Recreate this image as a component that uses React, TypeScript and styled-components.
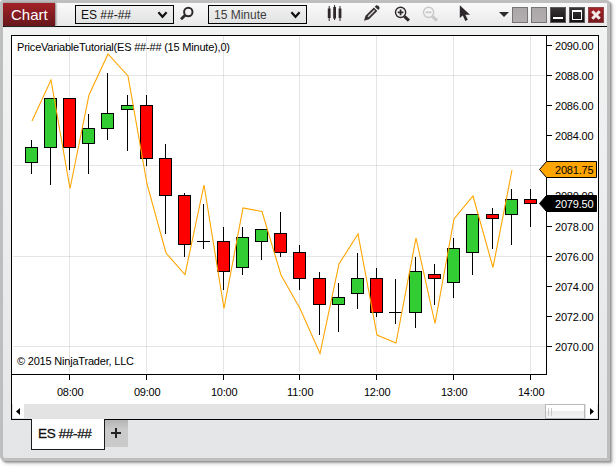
import React from 'react';
import styled, { createGlobalStyle } from 'styled-components';

const GlobalStyle = createGlobalStyle`
  * { box-sizing: border-box; }
  body { margin: 0; background: #fff; overflow: hidden; font-family: "Liberation Sans", Arial, sans-serif; }
`;

const Desktop = styled.div`
  width: 616px;
  height: 467px;
  background: #fff;
`;

const Window = styled.main`
  display: flex;
  flex-direction: column;
  width: 610px;
  height: 461px;
  border: 3px solid #bebebe;
  border-radius: 3px 4px 2px 5px;
  background: linear-gradient(#f2f4f4, #e4e5e7);
  box-shadow: 1px 1px 0 #9a9a9a, 2px 2px 2px #aaa, 3px 3px 4px #ddd;
`;

const Header = styled.header`
  display: flex;
  flex: none;
  height: 24px;
  border-bottom: 1px solid #000;
  background: linear-gradient(#fafafa, #e9e9ea);
`;

const Title = styled.h1`
  display: flex;
  align-items: center;
  width: 52px;
  height: 23px;
  margin: 0;
  padding-left: 8px;
  background: linear-gradient(#a32126, #66171c);
  box-shadow: 1px 0 2px #777;
  color: #fff;
  font-size: 15px;
  font-weight: 400;
`;

const Toolbar = styled.div`
  display: flex;
  flex: 1;
  padding: 2px 3px 0 20px;
`;

const Picker = styled.button<{ $tone: string }>`
  display: flex;
  align-items: center;
  justify-content: space-between;
  width: 99px;
  height: 19px;
  padding: 0 5px 0 5px;
  border: 1px solid #000;
  background: linear-gradient(#f1f1f1, #e1e2e2);
  color: ${(p) => p.$tone};
  font: 12px "Liberation Sans", Arial, sans-serif;
`;

const Slot = styled.span<{ $width: number; $gap: number }>`
  display: flex;
  flex: none;
  width: ${(p) => p.$width}px;
  height: 19px;
  margin-left: ${(p) => p.$gap}px;
`;

const Caption = styled.div`
  display: flex;
  gap: 3px;
  margin: 2px 0 0 auto;
`;

const CaptionButton = styled.button<{ $kind: 'blank' | 'dark' | 'close' }>`
  display: flex;
  width: 16px;
  height: 16px;
  padding: 0;
  border: 1px solid ${(p) => (p.$kind === 'blank' ? '#777476' : p.$kind === 'dark' ? '#5e5a5c' : '#8c4448')};
  background: ${(p) =>
    p.$kind === 'blank'
      ? 'linear-gradient(#aaa6a7, #b3afb0)'
      : p.$kind === 'dark'
        ? 'linear-gradient(#383435, #151213)'
        : 'linear-gradient(#a42328, #741b20)'};
`;

const ChartPanel = styled.section`
  display: flex;
  flex: none;
  flex-direction: column;
  width: 588px;
  height: 385px;
  margin: 8px 0 0 8px;
  border: 1px solid #000;
  background: #fff;
`;

const Plot = styled.svg`
  display: block;
  flex: none;
`;

const Scrollbar = styled.div`
  display: flex;
  flex: none;
  height: 15px;
  padding: 0 1px;
  background: #e3e3e3;
`;

const Arrow = styled.button`
  display: flex;
  width: 11px;
  height: 14px;
  padding: 0;
  border: 0;
  background: #fff;
`;

const Thumb = styled.div`
  display: flex;
  gap: 2px;
  width: 40px;
  height: 15px;
  margin-left: auto;
  margin-right: 1px;
  padding: 3px 2px;
  border: 1px solid #b9b9b9;
  background: linear-gradient(#fff 45%, #ececec 50%, #f3f3f3);
`;

const Grip = styled.i`
  width: 1px;
  height: 8px;
  background: #c9c9c9;
`;

const Tabs = styled.nav`
  display: flex;
  height: 31px;
  margin: -1px 0 0 28px;
`;

const Tab = styled.button`
  width: 74px;
  height: 31px;
  padding: 0 0 2px 6px;
  border: 1px solid #1b1b1b;
  border-top: 0;
  background: #fff;
  color: #111;
  font: 13.5px "Liberation Sans", Arial, sans-serif;
  letter-spacing: -0.35px;
  -webkit-text-stroke: 0.3px #111;
  text-align: left;
  white-space: nowrap;
`;

const AddTab = styled.button`
  display: flex;
  width: 23px;
  height: 27px;
  margin-top: 1px;
  padding: 0;
  border: 0;
  background: linear-gradient(#b4b4b4, #cacaca 35%);
`;

const Chevron = () => (
  <svg width="11" height="8" viewBox="0 0 11 8">
    <path d="M1.4 1.3 5.5 5.8 9.6 1.3" fill="none" stroke="#111" strokeWidth="2.2" />
  </svg>
);

const GREEN = '#32cd32';
const RED = '#ff0000';

// [center x, wick top, wick bottom, body top, body bottom, rising]
type Candle = [number, number, number, number, number, boolean];
const candles: Candle[] = [
  [31, 140, 174, 147, 163, true],
  [50, 98, 185, 98, 148, true],
  [69, 98, 170, 98, 148, false],
  [88, 114, 174, 128, 144, true],
  [107, 73, 140, 113, 129, true],
  [127, 95, 151, 105, 110, true],
  [146, 95, 166, 105, 159, false],
  [165, 144, 234, 158, 196, false],
  [184, 193, 257, 195, 245, false],
  [203, 204, 249, 241, 242, false],
  [223, 227, 290, 241, 272, false],
  [242, 227, 275, 237, 268, true],
  [261, 229, 260, 229, 242, true],
  [280, 212, 257, 233, 253, false],
  [299, 245, 290, 252, 279, false],
  [319, 272, 335, 278, 305, false],
  [338, 283, 332, 297, 305, true],
  [357, 253, 309, 278, 294, true],
  [376, 268, 317, 278, 313, false],
  [395, 279, 324, 312, 313, false],
  [415, 257, 328, 271, 313, true],
  [434, 264, 305, 274, 279, false],
  [453, 238, 298, 248, 283, true],
  [472, 214, 275, 214, 253, true],
  [492, 208, 249, 214, 219, false],
  [511, 189, 245, 199, 215, true],
  [530, 189, 227, 199, 204, false],
];

const indicator =
  '32,121 51,80 70,188.5 89,95 108,54 128,76 147,184 166,253 185,274.5 204,185 224,308.5 243,208 262,211.5 281,275 300,308.5 320,353.5 339,264 358,234 377,335 396,343 416,238 435,323.5 454,219 473,196 493,267.5 512,170';

const hours: [number, string][] = [
  [69, '08:00'], [146, '09:00'], [223, '10:00'], [299, '11:00'], [376, '12:00'], [453, '13:00'], [530, '14:00'],
];
const prices: [number, number][] = [
  [45, 2090], [75, 2088], [105, 2086], [135, 2084], [195, 2080], [226, 2078], [256, 2076], [286, 2074], [316, 2072], [346, 2070],
];

const PriceTag = ({ y, fill, color, value }: { y: number; fill: string; color: string; value: string }) => (
  <g>
    <path d={`M539.5 ${y + 8.5} L546.5 ${y + 0.5} H596.5 V${y + 16.5} H546.5 Z`} fill={fill} stroke="#000" />
    <text x="555" y={y + 13} fill={color} textLength="38.5">{value}</text>
  </g>
);

const ChartPlot = () => (
  <Plot width="586" height="368" viewBox="12 36 586 368" fontFamily='"Liberation Sans", Arial, sans-serif' fontSize="11">
    <g fill="#000" fillOpacity="0.1" shapeRendering="crispEdges">
      {hours.map(([x]) => <rect key={x} x={x} y="36" width="1" height="336" />)}
      {[75, 165, 256, 346].map((y) => <rect key={y} x="13" y={y} width="532" height="1" />)}
    </g>
    <g shapeRendering="crispEdges">
      {candles.map(([x, high, low, top, bottom, up]) => (
        <g key={x}>
          <rect x={x} y={high} width="1" height={low - high} />
          <rect x={x - 6} y={top} width="13" height={bottom - top} />
          {bottom - top > 2 && (
            <rect x={x - 5} y={top + 1} width="11" height={bottom - top - 2} fill={up ? GREEN : RED} />
          )}
        </g>
      ))}
    </g>
    <polyline points={indicator} fill="none" stroke="#ffa500" strokeWidth="1.1" />
    <g shapeRendering="crispEdges">
      <rect x="12" y="374" width="535" height="1" />
      <rect x="546" y="36" width="1" height="339" />
      {hours.map(([x]) => <rect key={x} x={x} y="375" width="1" height="5" />)}
      {prices.map(([y]) => <rect key={y} x="547" y={y} width="5" height="1" />)}
    </g>
    {hours.map(([x, label]) => <text key={x} x={x - 12} y="396" textLength="26.5">{label}</text>)}
    {prices.map(([y, price]) => <text key={y} x="555" y={y + 5} textLength="38.5">{price.toFixed(2)}</text>)}
    <text x="17" y="51" textLength="213">PriceVariableTutorial(ES ##-## (15 Minute),0)</text>
    <text x="17" y="365" textLength="117">© 2015 NinjaTrader, LLC</text>
    <PriceTag y={161} fill="#ffa500" color="#000" value="2081.75" />
    <PriceTag y={195} fill="#000" color="#fff" value="2079.50" />
  </Plot>
);

const ZoomGlyph = ({ color, plus }: { color: string; plus?: boolean }) => (
  <svg width="19" height="19" viewBox="0 0 19 19">
    <circle cx="8" cy="7.2" r="5.4" fill="none" stroke={color} strokeWidth="1.5" />
    <path d={plus ? 'M5 7.2H11M8 4.2V10.2' : 'M5 7.2H11'} stroke={color} strokeWidth="1.8" />
    <path d="M12 11.5 16.800 16" stroke={color} strokeWidth="3.2" />
  </svg>
);

export default function App() {
  return (
    <Desktop>
      <GlobalStyle />
      <Window>
        <Header>
          <Title>Chart</Title>
          <Toolbar>
            <Picker $tone="#111">ES ##-##<Chevron /></Picker>
            <Slot $width={16} $gap={5}>
              <svg width="16" height="19" viewBox="0 0 16 19">
                <circle cx="9.3" cy="7" r="4.200" fill="none" stroke="#2e292b" strokeWidth="2" />
                <path d="M6.300 10 2 14.300" stroke="#2e292b" strokeWidth="2.7" />
              </svg>
            </Slot>
            <Slot $width={99} $gap={13}><Picker $tone="#3d3d3d">15 Minute<Chevron /></Picker></Slot>
            <Slot $width={16} $gap={20}>
              <svg width="16" height="19" viewBox="0 0 16 19" fill="#30282b">
                <path d="M.8 3.500h2.800v9.500H.8zM6.200 2h2.800v11.500H6.200zM11.600 3.500h2.800v9.500h-2.800z" />
                <path d="M1.700 1h1v15h-1zM7.100 0h1v15h-1zM12.500 1h1v15h-1z" />
              </svg>
            </Slot>
            <Slot $width={18} $gap={20}>
              <svg width="18" height="19" viewBox="0 0 18 19">
                <path d="M1 15.800 2.500 10.800 10.800 2.500 14.300 6 6 14.300z" fill="#373033" />
                <path d="M11.700 1.700 13.300.3Q16 .1 16.700 3.200L15.200 5.100z" fill="#373033" />
                <path d="M5 11.800 11.600 5.200" stroke="#d8d8d8" strokeWidth="1.4" />
              </svg>
            </Slot>
            <Slot $width={18} $gap={12}><ZoomGlyph color="#30292c" plus /></Slot>
            <Slot $width={18} $gap={10}><ZoomGlyph color="#c9c8c8" /></Slot>
            <Slot $width={13} $gap={19}>
              <svg width="13" height="19" viewBox="0 0 13 19">
                <path d="M1.800.2V13L4.800 10.600 7.300 16 9.800 14.800 7.400 9.700H12z" fill="#2d282b" />
              </svg>
            </Slot>
            <Caption>
              <svg width="10" height="16" viewBox="0 0 10 16"><path d="M0 5H10L5 10z" fill="#2f2a2d" /></svg>
              <CaptionButton $kind="blank" aria-label="Link instrument" />
              <CaptionButton $kind="blank" aria-label="Link interval" />
              <CaptionButton $kind="dark" aria-label="Minimize">
                <svg width="14" height="14"><path d="M2 9H12V11H2z" fill="#fff" /></svg>
              </CaptionButton>
              <CaptionButton $kind="dark" aria-label="Maximize">
                <svg width="14" height="14"><path d="M2 2H12V12H2zM3 4V11H11V4z" fill="#fff" fillRule="evenodd" /></svg>
              </CaptionButton>
              <CaptionButton $kind="close" aria-label="Close">
                <svg width="14" height="14"><path d="M3.300 3.300 10.700 10.700M10.700 3.300 3.300 10.700" stroke="#f4e9e9" strokeWidth="3" /></svg>
              </CaptionButton>
            </Caption>
          </Toolbar>
        </Header>
        <ChartPanel>
          <ChartPlot />
          <Scrollbar>
            <Arrow aria-label="Scroll left"><svg width="11" height="14"><path d="M7 4V11L3 7.500z" /></svg></Arrow>
            <Thumb><Grip /><Grip /></Thumb>
            <Arrow aria-label="Scroll right"><svg width="11" height="14"><path d="M4 4V11L8 7.500z" /></svg></Arrow>
          </Scrollbar>
        </ChartPanel>
        <Tabs>
          <Tab>ES ##-##</Tab>
          <AddTab aria-label="Add tab">
            <svg width="23" height="27"><path d="M6 13H16M11 8V18" stroke="#222" strokeWidth="2" /></svg>
          </AddTab>
        </Tabs>
      </Window>
    </Desktop>
  );
}
